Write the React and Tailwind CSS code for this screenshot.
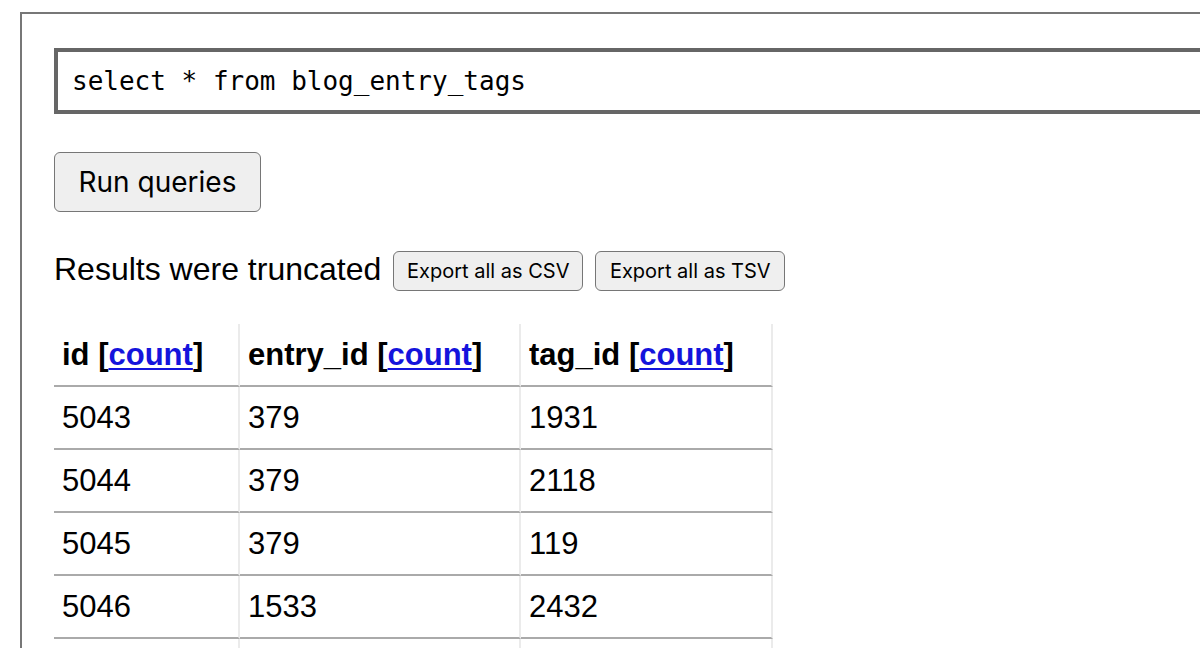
import React from "react";

const rows = [
  ["5043", "379", "1931"],
  ["5044", "379", "2118"],
  ["5045", "379", "119"],
  ["5046", "1533", "2432"],
  ["", "", ""],
];

function Head({ name }) {
  return (
    <th className="h-[63px] box-border border-b-2 border-b-[#aaaaaa] border-r-2 border-r-[#ebebeb] pl-[8px] text-left align-middle font-bold text-[31px] leading-none whitespace-nowrap">
      {name} [
      <a href="#" className="text-[#1414dc] underline decoration-[2px] underline-offset-[3px]">
        count
      </a>
      ]
    </th>
  );
}

export default function App() {
  return (
    <div className="w-[1200px] h-[648px] overflow-hidden bg-white text-black">
      <div
        className="ml-[20px] mt-[12px] w-[1400px] h-[700px] box-border border-l-2 border-t-2 border-[#777777] pl-[32px] pt-[34px]"
        style={{ fontFamily: '"Liberation Sans", Arial, sans-serif' }}
      >
        <textarea
          readOnly
          rows={1}
          defaultValue="select * from blog_entry_tags"
          className="block w-[1300px] h-[66px] box-border border-4 border-[#666666] bg-white px-[14px] py-[10px] text-[26px] leading-[38px] resize-none overflow-hidden outline-none"
          style={{ fontFamily: '"DejaVu Sans Mono", monospace' }}
        />
        <button
          className="mt-[38px] block w-[207px] h-[60px] box-border rounded-[6px] border-[1.5px] border-[#767676] bg-[#efefef] text-[28px] leading-none"
          style={{ fontFamily: 'Inter, "Liberation Sans", sans-serif' }}
        >
          Run queries
        </button>
        <div className="mt-[39px] flex items-center h-[40px]">
          <span className="text-[32px] leading-none -mt-[4px]">Results were truncated</span>
          <button
            className="ml-[12px] w-[190px] h-[40px] box-border rounded-[6px] border-[1.5px] border-[#767676] bg-[#efefef] text-[20px] leading-none"
            style={{ fontFamily: 'Inter, "Liberation Sans", sans-serif' }}
          >
            Export all as CSV
          </button>
          <button
            className="ml-[12px] w-[190px] h-[40px] box-border rounded-[6px] border-[1.5px] border-[#767676] bg-[#efefef] text-[20px] leading-none"
            style={{ fontFamily: 'Inter, "Liberation Sans", sans-serif' }}
          >
            Export all as TSV
          </button>
        </div>
        <table className="mt-[33px] table-fixed w-[719px] border-separate border-spacing-0">
          <colgroup>
            <col className="w-[186px]" />
            <col className="w-[281px]" />
            <col className="w-[252px]" />
          </colgroup>
          <thead>
            <tr>
              <Head name="id" />
              <Head name="entry_id" />
              <Head name="tag_id" />
            </tr>
          </thead>
          <tbody>
            {rows.map((r, ri) => (
              <tr key={ri}>
                {r.map((c, i) => (
                  <td
                    key={i}
                    className="h-[63px] box-border border-b-2 border-b-[#aaaaaa] border-r-2 border-r-[#ebebeb] pl-[8px] align-middle text-[31px] leading-none"
                  >
                    {c}
                  </td>
                ))}
              </tr>
            ))}
          </tbody>
        </table>
      </div>
    </div>
  );
}
